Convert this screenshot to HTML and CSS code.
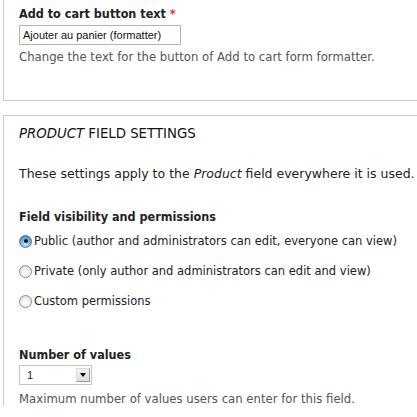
FILE: index.html
```html
<!DOCTYPE html>
<html>
<head>
<meta charset="utf-8">
<link rel="stylesheet" href="styles.css">
</head>
<body>
<div class="fieldset first">
  <div class="form-item">
    <label class="label">Add to cart button text <span class="req">*</span></label>
    <div class="textbox">Ajouter au panier (formatter)</div>
    <div class="desc">Change the text for the button of Add to cart form formatter.</div>
  </div>
</div>
<div class="fieldset second">
  <div class="legend"><em>PRODUCT</em> FIELD SETTINGS</div>
  <p class="intro">These settings apply to the <em>Product</em> field everywhere it is used.</p>
  <div class="form-item">
    <div class="label">Field visibility and permissions</div>
    <div class="radios">
      <div class="radio-row"><span class="radio checked"></span><span>Public (author and administrators can edit, everyone can view)</span></div>
      <div class="radio-row"><span class="radio"></span><span>Private (only author and administrators can edit and view)</span></div>
      <div class="radio-row"><span class="radio"></span><span>Custom permissions</span></div>
    </div>
  </div>
  <div class="form-item values">
    <div class="label">Number of values</div>
    <div class="select"><span class="sel-val">1</span><span class="sel-btn"><span class="tri"></span></span></div>
    <div class="desc">Maximum number of values users can enter for this field.</div>
  </div>
</div>
</body>
</html>
```
FILE: styles.css
```css
html, body {
  margin: 0;
  padding: 0;
  overflow: hidden;
  background: #fff;
}
body {
  font-family: "DejaVu Sans", sans-serif;
  font-size: 12px;
  color: #222;
  width: 417px;
}
.fieldset {
  border: 1px solid #ccc;
  margin-left: 3px;
  margin-right: -20px;
  padding-left: 15px;
}
.first {
  border-top: none;
  height: 101px;
  box-sizing: border-box;
  padding-top: 6px;
}
.second {
  margin-top: 14px;
  border-bottom: none;
  padding-top: 10px;
}
.label {
  display: block;
  font-family: "DejaVu Sans Condensed", "DejaVu Sans", sans-serif;
  font-stretch: condensed;
  font-weight: bold;
  font-size: 12.5px;
  line-height: 16px;
  color: #222;
}
.req { color: #e33; }
.textbox {
  margin-top: 3px;
  width: 162px;
  height: 20px;
  box-sizing: border-box;
  border: 1px solid #b4b4b4;
  font-family: "Liberation Sans", Arial, sans-serif;
  font-size: 11px;
  line-height: 18px;
  padding-left: 3px;
  color: #111;
}
.desc {
  margin-top: 5px;
  font-size: 11.7px;
  line-height: 14px;
  color: #555;
}
.legend {
  font-size: 13.3px;
  line-height: 16px;
  color: #111;
}
.intro {
  margin: 24px 0 0;
  font-size: 12.5px;
  line-height: 16px;
}
.second .form-item { margin-top: 27px; }
.radios {
  margin-top: 8px;
  display: flex;
  flex-direction: column;
  gap: 14px;
  font-size: 11.5px;
}
.radio-row { display: flex; align-items: center; height: 16px; gap: 2px; }
.radio {
  width: 13px;
  height: 13px;
  border-radius: 50%;
  box-sizing: border-box;
  border: 1px solid #8a8a8a;
  background: radial-gradient(circle at 50% 70%, #fff 0%, #ececec 60%, #cfcfcf 100%);
  position: relative;
  flex: none;
}
.radio.checked {
  border-color: #4a6f9e;
  background: radial-gradient(circle at 50% 75%, #cfe6fb 0%, #6fa7e0 55%, #3b78c2 100%);
}
.radio.checked::after {
  content: "";
  position: absolute;
  left: 3.5px;
  top: 3.5px;
  width: 4px;
  height: 4px;
  border-radius: 50%;
  background: #111;
}
.second .values { margin-top: 38px; }
.select {
  margin-top: 2px;
  width: 73px;
  height: 20px;
  box-sizing: border-box;
  border: 1px solid #c4c4c4;
  display: flex;
  align-items: center;
  justify-content: space-between;
  padding: 0 1px 0 7px;
  font-family: "Liberation Sans", Arial, sans-serif;
  font-size: 11px;
}
.sel-btn {
  width: 14px;
  height: 14px;
  box-sizing: border-box;
  border: 1px solid #999;
  border-top-color: #ddd;
  border-left-color: #ddd;
  background: linear-gradient(#f4f4f4, #dcdcdc);
  display: flex;
  align-items: center;
  justify-content: center;
}
.tri {
  width: 0;
  height: 0;
  border-left: 3px solid transparent;
  border-right: 3px solid transparent;
  border-top: 4px solid #000;
}
.values .desc { margin-top: 7px; }
```
